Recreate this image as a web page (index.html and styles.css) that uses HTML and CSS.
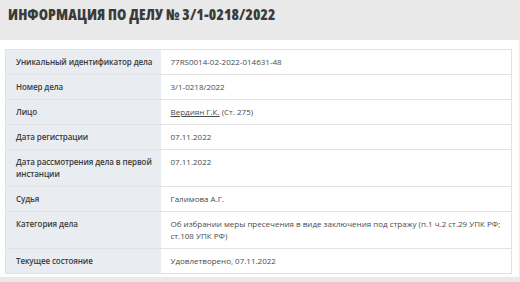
FILE: index.html
```html
<!DOCTYPE html>
<html lang="ru">
<head>
<meta charset="utf-8">
<link rel="stylesheet" href="styles.css">
</head>
<body>
<header class="head">
  <h1 class="title">ИНФОРМАЦИЯ ПО ДЕЛУ № 3/1-0218/2022</h1>
</header>
<section class="panel">
  <table class="info">
    <tr><th>Уникальный идентификатор дела</th><td>77RS0014-02-2022-014631-48</td></tr>
    <tr><th>Номер дела</th><td>3/1-0218/2022</td></tr>
    <tr><th>Лицо</th><td><a class="link" href="#">Вердиян Г.К.</a> (Ст. 275)</td></tr>
    <tr><th>Дата регистрации</th><td>07.11.2022</td></tr>
    <tr><th>Дата рассмотрения дела в первой инстанции</th><td>07.11.2022</td></tr>
    <tr><th>Судья</th><td>Галимова А.Г.</td></tr>
    <tr><th>Категория дела</th><td>Об избрании меры пресечения в виде заключения под стражу (п.1 ч.2 ст.29 УПК РФ; ст.108 УПК РФ)</td></tr>
    <tr><th>Текущее состояние</th><td>Удовлетворено, 07.11.2022</td></tr>
  </table>
</section>
<div class="foot"></div>
</body>
</html>
```
FILE: styles.css
```css
html, body {
  margin: 0;
  padding: 0;
  background: #e9e9e9;
}
body {
  font-family: "Open Sans", "Liberation Sans", sans-serif;
  color: #3a3a3a;
}
.head {
  height: 40px;
  background: #e9e9e9;
  box-sizing: border-box;
  padding: 4px 0 0 8px;
}
.title {
  margin: 0;
  font-family: "Open Sans", sans-serif;
  font-weight: 800;
  font-stretch: 75%;
  font-size: 15px;
  line-height: 20px;
  color: #3b3b3b;
  letter-spacing: 0.1px;
}
.panel {
  background: #ffffff;
  padding: 9px 7px 3px 5px;
  border-right: 1px solid #ececec;
}
.info {
  width: 100%;
  border-collapse: collapse;
  border: 1px solid #e2e2e2;
  font-size: 8px;
  line-height: 12px;
}
.info th, .info td {
  border-bottom: 1px solid #e2e2e2;
  text-align: left;
  vertical-align: top;
  padding: 6px 10px 6px 10px;
}
.info th {
  width: 155px;
  box-sizing: border-box;
  padding-right: 2px;
  background: #e9edf2;
  font-weight: 600;
  letter-spacing: -0.1px;
  color: #3a3a3a;
}
.info td {
  font-weight: 400;
  color: #4a4a4a;
}
.link {
  color: #4a4a4a;
  text-decoration: underline;
}
```
